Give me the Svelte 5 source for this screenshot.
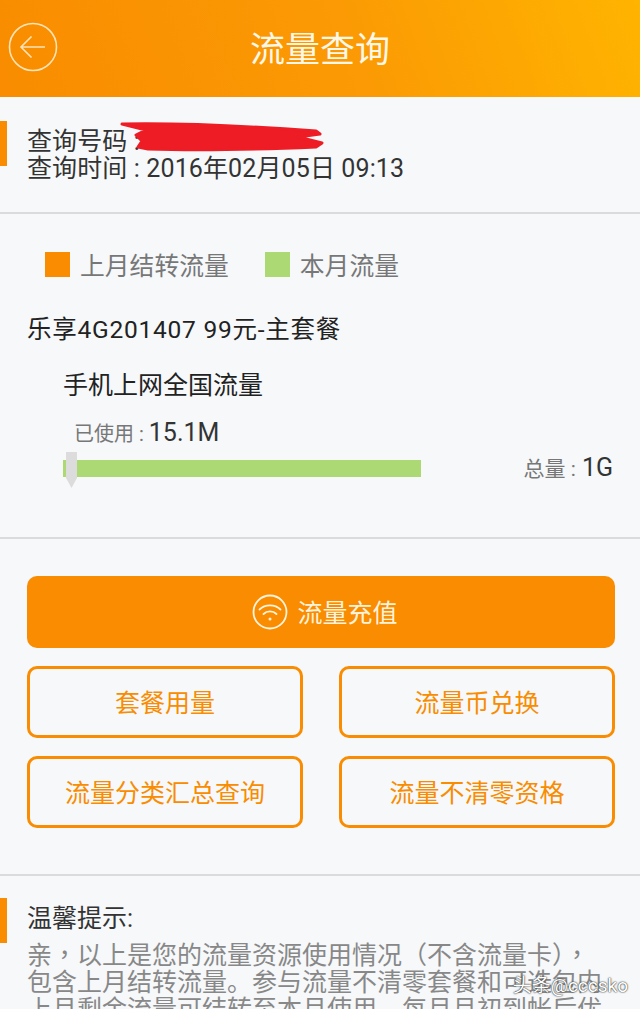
<script>
  const buttons = ["套餐用量", "流量币兑换", "流量分类汇总查询", "流量不清零资格"];
</script>

<div class="page">
  <header class="top">
    <svg class="back" viewBox="0 0 50 50" width="50" height="50">
      <circle cx="25" cy="25" r="23.5" fill="none" stroke="#fde3b8" stroke-width="1.6" />
      <path d="M37 25H13M23.500 14.500L13 25L23.500 35.500" fill="none" stroke="#fde3b8" stroke-width="1.6" />
    </svg>
    <h1>流量查询</h1>
  </header>

  <section class="query">
    <div class="mark"></div>
    <p>查询号码 :</p>
    <p>查询时间 : 2016年02月05日 09:13</p>
    <svg class="scribble" viewBox="0 0 210 32" width="210" height="32">
      <path d="M4 3C60 2 130 5 198 10L202 13L180 16L204 22L198 26C150 28 90 30 30 28L20 26L24 20L18 14L28 9Z" fill="#ee1c25" stroke="#ee1c25" stroke-width="3" stroke-linejoin="round" />
    </svg>
  </section>

  <section class="usage">
    <div class="legend">
      <span class="swatch orange"></span><span class="legend-text">上月结转流量</span>
      <span class="swatch green"></span><span class="legend-text">本月流量</span>
    </div>
    <p class="plan">乐享4G201407 99元-主套餐</p>
    <p class="kind">手机上网全国流量</p>
    <p class="used"><span>已使用 : </span>15.1M</p>
    <div class="meter">
      <div class="bar">
        <svg class="pin" viewBox="0 0 11 36" width="11" height="36">
          <path d="M0 0H11V26L5.500 36L0 26Z" fill="#dcdcdc" />
        </svg>
      </div>
      <p class="total"><span>总量 : </span>1G</p>
    </div>
  </section>

  <section class="actions">
    <button class="primary">
      <svg viewBox="0 0 36 36" width="36" height="36">
        <circle cx="18" cy="18" r="16.500" fill="none" stroke="#fff3dc" stroke-width="1.800" />
        <path d="M7.500 15.500C13 10 23 10 28.500 15.500M11.500 20C15 16.500 21 16.500 24.500 20" fill="none" stroke="#fff3dc" stroke-width="1.800" stroke-linecap="round" />
        <circle cx="18" cy="25" r="1.500" fill="#fff3dc" />
      </svg>
      流量充值
    </button>
    <div class="grid">
      {#each buttons as label}
        <button class="outline">{label}</button>
      {/each}
    </div>
  </section>

  <section class="tips">
    <div class="mark"></div>
    <h2>温馨提示:</h2>
    <p>亲<span class="tc">，</span>以上是您的流量资源使用情况<span class="tc">（</span>不含流量卡<span class="tc">）</span><span class="tc">，</span>包含上月结转流量。参与流量不清零套餐和可选包内上月剩余流量可结转至本月使用，每月月初到帐后优</p>
  </section>

  <div class="watermark">头条@cccsko</div>
</div>

<style>
  :global(body) {
    margin: 0;
    background: #f6f8fa;
  }
  .page {
    position: relative;
    width: 640px;
    height: 1009px;
    overflow: hidden;
    background: #f6f8fa;
    font-family: Roboto, "Noto Sans CJK SC", sans-serif;
    color: #333;
  }
  p, h1, h2 {
    margin: 0;
    font-weight: 400;
  }
  .top {
    position: relative;
    height: 97px;
    display: flex;
    align-items: center;
    justify-content: center;
    background: linear-gradient(70deg, #f98c00 0%, #fb9a04 55%, #ffb400 100%);
  }
  .back {
    position: absolute;
    left: 8px;
    top: 22px;
  }
  h1 {
    color: #fff8e8;
    font-size: 35px;
    line-height: 97px;
    padding-top: 4px;
  }
  .mark {
    position: absolute;
    left: 0;
    width: 7px;
    height: 45px;
    background: #f98c00;
  }
  .query {
    position: relative;
    height: 117px;
    padding: 0 0 0 27px;
    box-sizing: border-box;
    border-bottom: 2px solid #d9dbdd;
    font-size: 25px;
    line-height: 27px;
    letter-spacing: 0.12px;
  }
  .query .mark {
    top: 24px;
  }
  .query p:first-of-type {
    padding-top: 31px;
  }
  .scribble {
    position: absolute;
    left: 118px;
    top: 24px;
  }
  .usage {
    height: 325px;
    box-sizing: border-box;
    padding: 36px 0 0 0;
    border-bottom: 2px solid #d9dbdd;
  }
  .legend {
    display: flex;
    align-items: center;
    padding-left: 45px;
    height: 28px;
  }
  .swatch {
    width: 25px;
    height: 25px;
  }
  .orange {
    background: #f98c00;
  }
  .green {
    background: #acd974;
  }
  .legend-text {
    margin-left: 10px;
    margin-right: 36px;
    font-size: 24.800px;
    color: #777;
  }
  .plan {
    margin: 34px 0 0 27px;
    font-size: 24.500px;
    line-height: 36px;
    letter-spacing: 0.75px;
    color: #222;
  }
  .kind {
    margin: 20px 0 0 63px;
    font-size: 25px;
    line-height: 36px;
    color: #222;
  }
  .used {
    margin: 11px 0 0 74px;
    font-size: 25px;
    line-height: 36px;
    color: #333;
  }
  .used span, .total span {
    font-size: 20px;
    color: #777;
    margin-right: 5px;
  }
  .total span {
    font-size: 21px;
    margin-right: 6px;
  }
  .meter {
    position: relative;
    display: flex;
    align-items: center;
    margin: 7px 0 0 63px;
    height: 18px;
  }
  .bar {
    position: relative;
    width: 358px;
    height: 17px;
    background: #acd974;
  }
  .pin {
    position: absolute;
    left: 3px;
    top: -8px;
  }
  .total {
    margin-left: auto;
    margin-right: 27px;
    padding-bottom: 2px;
    font-size: 25px;
    color: #333;
  }
  .actions {
    height: 337px;
    box-sizing: border-box;
    padding: 37px 25px 0 27px;
    border-bottom: 2px solid #d9dbdd;
  }
  button {
    font-family: inherit;
    font-size: 25px;
    padding: 0 0 3px;
    cursor: pointer;
  }
  .primary {
    width: 100%;
    height: 72px;
    display: flex;
    align-items: center;
    justify-content: center;
    gap: 9px;
    padding-left: 8px;
    border: none;
    border-radius: 10px;
    background: #f98c00;
    color: #fff3dc;
  }
  .primary svg {
    margin-top: 3px;
  }
  .grid {
    display: grid;
    grid-template-columns: 276px 276px;
    justify-content: space-between;
    gap: 18px 36px;
    margin-top: 18px;
  }
  .outline {
    height: 72px;
    border: 3px solid #f98c00;
    border-radius: 10px;
    background: transparent;
    color: #f98c00;
  }
  .tips {
    position: relative;
    padding: 21px 36px 0 27px;
  }
  .tips .mark {
    top: 22px;
  }
  h2 {
    font-size: 25px;
    line-height: 43px;
    color: #333;
  }
  .tips p {
    font-size: 25px;
    line-height: 27px;
    color: #888;
  }
  .tc {
    font-family: "Noto Sans CJK TC", sans-serif;
  }
  .watermark {
    position: absolute;
    right: 12px;
    bottom: 11px;
    font-size: 19px;
    line-height: 24px;
    color: #fff;
    text-shadow: 0 0 2px #333, 0 0 1px #333;
  }
</style>
